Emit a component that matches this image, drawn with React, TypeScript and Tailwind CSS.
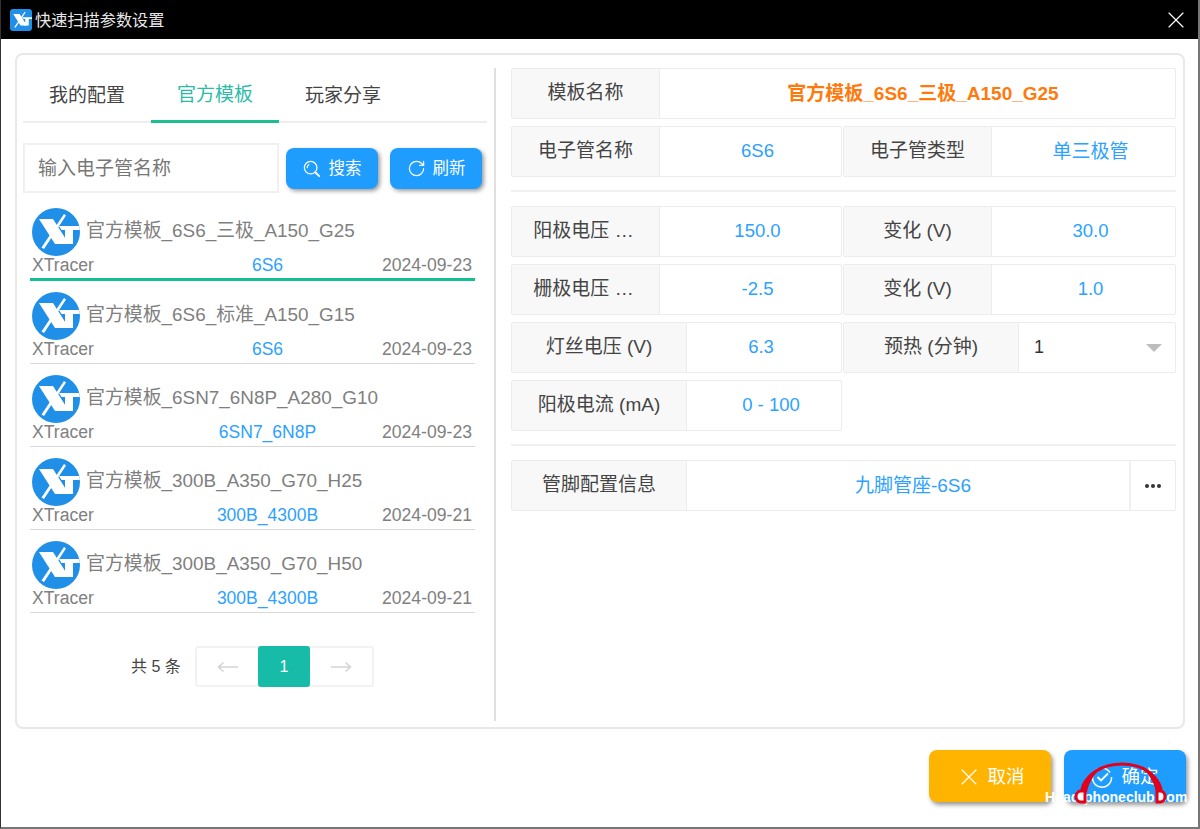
import React from 'react';
import { RotateCw, X } from 'lucide-react';

const FONT = 'font-["Liberation_Sans","Noto_Sans_CJK_SC",sans-serif]';

const templates = [
  { name: '官方模板_6S6_三极_A150_G25', tube: '6S6', date: '2024-09-23', active: true },
  { name: '官方模板_6S6_标准_A150_G15', tube: '6S6', date: '2024-09-23', active: false },
  { name: '官方模板_6SN7_6N8P_A280_G10', tube: '6SN7_6N8P', date: '2024-09-23', active: false },
  { name: '官方模板_300B_A350_G70_H25', tube: '300B_4300B', date: '2024-09-21', active: false },
  { name: '官方模板_300B_A350_G70_H50', tube: '300B_4300B', date: '2024-09-21', active: false },
];

const XtMark: React.FC<{ className?: string }> = ({ className }) => (
  <svg viewBox="0 0 48 48" className={className}>
    <path fill="#fff" d="M7 11 H21 L37 36 H23 Z" />
    <path fill="#fff" d="M32 6 L34 7.5 L12 41 L9.5 39.5 Z" />
    <path fill="#fff" d="M27 18 H48 V22 H41 V36 H29 L33 34.5 V22 H29.5 Z" />
    <path fill="#1f8fe8" d="M30 22 H33 V29 Z" />
  </svg>
);

const Avatar = () => (
  <div className="w-12 h-12 rounded-full bg-[#1f8fe8] overflow-hidden shrink-0">
    <XtMark className="w-12 h-12" />
  </div>
);

const Cell: React.FC<{
  label: string;
  value?: string;
  labelW: string;
  labelClass?: string;
  valueClass?: string;
  children?: React.ReactNode;
}> = ({ label, value, labelW, labelClass, valueClass, children }) => (
  <div className="flex h-[51px] border border-[#ececec] rounded-[2px] bg-white">
    <div className={`${labelW} shrink-0 bg-[#f8f8f8] border-r border-[#ececec] flex items-center justify-center text-[19px] text-[#444] ${labelClass ?? ''}`}>
      {label}
    </div>
    {children ?? (
      <div className={`flex-1 flex items-center justify-center text-[18.5px] text-[#2ca2ff] ${valueClass ?? ''}`}>{value}</div>
    )}
  </div>
);

const SearchIcon = () => (
  <svg viewBox="0 0 20 20" className="w-[18px] h-[18px]" fill="none" stroke="#fff" strokeWidth="1.4" strokeLinecap="round">
    <circle cx="8.5" cy="8.5" r="7" />
    <path d="M13.6 13.6 L18 18" strokeWidth="2" />
    <path d="M4.6 8.5 A4 4 0 0 1 6.5 5.2" />
  </svg>
);

const LongArrow: React.FC<{ right?: boolean }> = ({ right }) => (
  <svg viewBox="0 0 22 12" className={`w-[22px] h-3 ${right ? 'rotate-180' : ''}`} fill="none" stroke="#d4d4d4" strokeWidth="1.6">
    <path d="M1 6 H21 M6.5 1.5 L1.5 6 L6.5 10.5" />
  </svg>
);

export default function App() {
  return (
    <div className={`${FONT} w-[1200px] h-[829px] bg-white flex flex-col border-l border-r-2 border-b-2 border-l-[#333] border-r-[#777] border-b-[#777] overflow-hidden relative`}>
      {/* title bar */}
      <div className="h-[39px] shrink-0 bg-black flex items-center pl-[9px] pr-[8px] text-white">
        <div className="w-[22px] h-[22px] rounded-[3px] bg-[#1f8fe8] overflow-hidden">
          <XtMark className="w-[22px] h-[22px]" />
        </div>
        <span className="ml-[3px] pt-[2px] text-[16.2px] text-[#e8e8e8] leading-none">快速扫描参数设置</span>
        <X className="ml-auto" size={28} strokeWidth={1} color="#fff" />
      </div>

      {/* main panel */}
      <div className="ml-[14px] mt-[14px] w-[1170px] h-[676px] border-2 border-[#e8e8e8] rounded-[8px] flex">
        <div className="w-[479px] border-r-2 border-[#e0e0e0] mt-[13px] mb-[6px] pl-[6px] pr-[7px] shrink-0">
          <div className="flex h-[55px] border-b-2 border-[#eee] text-[19px] text-[#444]">
            <div className="w-32 flex items-center justify-center pt-[3px]">我的配置</div>
            <div className="w-32 flex items-center justify-center pt-[3px] text-[#2dbba8] border-b-[3px] border-[#1cbf91] h-[55px]">官方模板</div>
            <div className="w-32 flex items-center justify-center pt-[3px]">玩家分享</div>
          </div>

          <div className="flex items-center mt-[20px] h-[50px]">
            <div className="w-[256px] h-[50px] border-2 border-[#f0f0f0] flex items-center pl-[13px] pt-[3px] text-[19px] text-[#777]">输入电子管名称</div>
            <button className="ml-[7px] w-[92px] h-[41px] rounded-[8px] bg-[#1f9dff] text-white text-[16.5px] flex items-center justify-center gap-[8px] pt-[1px] shadow-[2px_2px_4px_rgba(0,0,0,0.4)]">
              <SearchIcon />搜索
            </button>
            <button className="ml-[12px] w-[92px] h-[41px] rounded-[8px] bg-[#1f9dff] text-white text-[16.5px] flex items-center justify-center gap-[7px] pt-[1px] shadow-[2px_2px_4px_rgba(0,0,0,0.4)]">
              <RotateCw size={19} strokeWidth={1.5} />刷新
            </button>
          </div>

          <div className="ml-[7px] w-[445px] mt-[15px]">
            {templates.map((t) => (
              <div key={t.name} className={t.active ? 'h-[73px] flex flex-col border-b-[3px] border-[#14bf94]' : 'h-[83px] flex flex-col border-b border-[#d8d8d8]'}>
                <div className={t.active ? 'flex items-center pl-[2px]' : 'flex items-center pl-[2px] mt-[11px]'}>
                  <Avatar />
                  <span className="ml-[6px] text-[18.9px] text-[#7f7f7f] leading-[24px] -mt-[3px] whitespace-nowrap">{t.name}</span>
                </div>
                <div className="flex items-center justify-between -mt-[1px] pl-[2px] pr-[3px] text-[17.6px] leading-[20px] text-[#808080]">
                  <span className="w-[138px]">XTracer</span>
                  <span className="text-[#2ca2ff] text-[17.5px]">{t.tube}</span>
                  <span className="w-[107px] text-right">{t.date}</span>
                </div>
              </div>
            ))}
          </div>

          <div className="flex items-center mt-[33px] ml-[108px]">
            <span className="text-[16px] text-[#444] w-[64px]">共 5 条</span>
            <div className="flex h-[41px] w-[179px] border-2 border-[#f2f2f2] rounded-[3px]">
              <div className="w-[61px] flex items-center justify-center"><LongArrow /></div>
              <div className="w-[52px] -my-[2px] h-[41px] bg-[#17bca8] rounded-[3px] text-white text-[16px] flex items-center justify-center">1</div>
              <div className="flex-1 flex items-center justify-center"><LongArrow right /></div>
            </div>
          </div>
        </div>

        {/* right side */}
        <div className="w-[665px] ml-[15px] mt-[13px]">
          <div className="flex h-[51px] border border-[#ececec] rounded-[2px]">
            <div className="w-[148px] shrink-0 bg-[#f8f8f8] border-r border-[#ececec] flex items-center justify-center text-[19px] text-[#444]">模板名称</div>
            <div className="flex-1 flex items-center justify-center pl-[11px] pt-[2px] text-[19px] font-bold text-[#ff7a0c]">官方模板_6S6_三极_A150_G25</div>
          </div>
          <div className="grid grid-cols-[331px_333px] gap-x-[1px] mt-[7px]">
            <Cell label="电子管名称" value="6S6" labelW="w-[148px]" valueClass="pl-[14px] pb-[2px]" />
            <Cell label="电子管类型" value="单三极管" labelW="w-[148px]" valueClass="pl-[14px] pt-[2px] text-[19px]" />
          </div>
          <div className="border-t-2 border-[#f0f0f0] mt-[13px] mb-[14px]" />
          <div className="grid grid-cols-[331px_333px] gap-x-[1px] gap-y-[7px]">
            <Cell label="阳极电压 …" value="150.0" labelW="w-[148px]" labelClass="pr-[4px]" valueClass="pl-[14px] pb-[2px]" />
            <Cell label="变化 (V)" value="30.0" labelW="w-[148px]" valueClass="pl-[14px] pb-[2px]" />
            <Cell label="栅极电压 …" value="-2.5" labelW="w-[148px]" labelClass="pr-[4px]" valueClass="pl-[14px] pb-[2px]" />
            <Cell label="变化 (V)" value="1.0" labelW="w-[148px]" valueClass="pl-[14px] pb-[2px]" />
            <Cell label="灯丝电压 (V)" value="6.3" labelW="w-[175px]" valueClass="pr-[6px] pb-[2px]" />
            <Cell label="预热 (分钟)" labelW="w-[175px]">
              <div className="flex-1 flex items-center justify-between pl-[15px] pr-[13px] text-[18px] text-[#333]">
                <span>1</span>
                <span className="w-0 h-0 border-x-[8px] border-x-transparent border-t-[8px] border-t-[#bdbdbd]" />
              </div>
            </Cell>
            <Cell label="阳极电流 (mA)" value="0 - 100" labelW="w-[175px]" valueClass="pl-[14px] pb-[2px]" />
          </div>
          <div className="border-t-2 border-[#f0f0f0] mt-[13px] mb-[14px]" />
          <div className="flex h-[51px] border border-[#ececec] rounded-[2px]">
            <div className="w-[175px] shrink-0 bg-[#f8f8f8] border-r border-[#ececec] flex items-center justify-center text-[19px] text-[#444]">管脚配置信息</div>
            <div className="flex-1 flex items-center justify-center pl-[10px] pt-[1px] text-[19px] text-[#2ca2ff]">九脚管座-6S6</div>
            <div className="w-[46px] border-l-2 border-[#f0f0f0] flex items-center justify-center gap-[2px]">
              <span className="w-1 h-1 rounded-full bg-[#333]" />
              <span className="w-1 h-1 rounded-full bg-[#333]" />
              <span className="w-1 h-1 rounded-full bg-[#333]" />
            </div>
          </div>
        </div>
      </div>

      {/* footer buttons */}
      <div className="flex justify-end mt-[21px] pr-[12px] gap-[13px]">
        <button className="w-[122px] h-[52px] rounded-[8px] bg-[#ffb400] text-white text-[18.5px] flex items-center justify-center gap-[4px] pt-[2px] shadow-[2px_3px_4px_rgba(0,0,0,0.4)]">
          <X size={28} strokeWidth={1} />取消
        </button>
        <button className="w-[122px] h-[52px] rounded-[8px] bg-[#1f9dff] text-white text-[18.5px] flex items-center justify-center gap-[8px] pt-[2px] shadow-[2px_3px_4px_rgba(0,0,0,0.4)]">
          <svg viewBox="0 0 22 22" className="w-[22px] h-[22px]" fill="none" stroke="#fff" strokeWidth="1.5">
            <path d="M19 6.5 A9.5 9.5 0 1 0 20.5 11" />
            <path d="M6.5 11 L10 14.5 L17 7.5" strokeWidth="1.8" />
          </svg>
          确定
        </button>
      </div>

      {/* watermark */}
      <div className="absolute left-[1044px] top-[789px] text-[14px] font-bold leading-[16px] text-white whitespace-nowrap">
        Head-phoneclub.com
      </div>
      <svg viewBox="0 0 103 50" className="absolute left-[1069px] top-[760px] w-[103px] h-[50px]" fill="none">
        <path d="M13 32 C15 14 32 4 52 4 C72 4 88 14 91 32" stroke="#e2001a" strokeWidth="3" />
        <path d="M10 32 C11 21 20 11 32 7 C24 14 19 22 17 32 Z" fill="#e2001a" />
        <path d="M93 32 C92 21 83 11 71 7 C79 14 84 22 86 32 Z" fill="#e2001a" />
        <path d="M15 31 H11 A5 5.5 0 0 0 11 42 H15 Z" fill="#fff" stroke="#e2001a" strokeWidth="3" />
        <path d="M87 31 H90 A5 5.5 0 0 1 90 42 H87 Z" fill="#fff" stroke="#e2001a" strokeWidth="3" />
      </svg>
    </div>
  );
}
